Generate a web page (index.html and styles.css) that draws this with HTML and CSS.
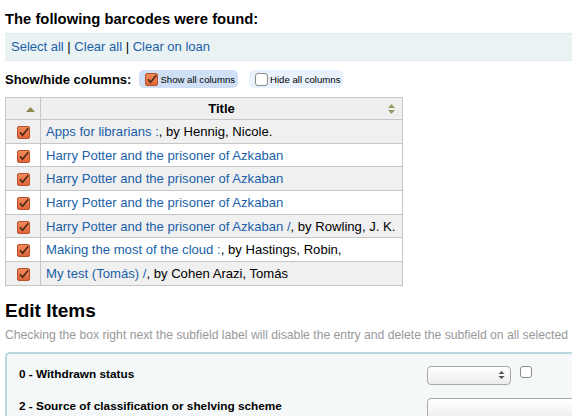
FILE: index.html
```html
<!DOCTYPE html>
<html>
<head>
<meta charset="utf-8">
<link rel="stylesheet" href="styles.css">
</head>
<body>
<div class="page">
  <h1 class="title">The following barcodes were found:</h1>
  <div class="toolbar">
    <a href="#">Select all</a> | <a href="#">Clear all</a> | <a href="#">Clear on loan</a>
  </div>
  <div class="colvis">
    <span class="colvis-label">Show/hide columns:</span>
    <span class="pill pill-on"><span class="cb cb-on"><svg viewBox="0 0 13 13" width="13" height="13"><path d="M3 6.2 L5.6 9.3 L11.2 2.2" fill="none" stroke="#4a2a1a" stroke-width="1.6"/></svg></span>Show all columns</span>
    <span class="pill pill-off"><span class="cb cb-off"></span>Hide all columns</span>
  </div>
  <table class="items">
    <thead>
      <tr>
        <th class="c1"><svg viewBox="0 0 9 5" width="9" height="5"><path d="M0 5 L4.5 0 L9 5Z" fill="#8c8a4e"/></svg></th>
        <th class="c2"><span>Title</span><svg class="sort" viewBox="0 0 7 10" width="7" height="10"><path d="M0 4 L3.5 0 L7 4Z M0 6 L3.5 10 L7 6Z" fill="#9a9a6a"/></svg></th>
      </tr>
    </thead>
    <tbody>
      <tr class="odd"><td class="c1"><span class="cb cb-on"><svg viewBox="0 0 13 13" width="13" height="13"><path d="M3 6.2 L5.6 9.3 L11.2 2.2" fill="none" stroke="#4a2a1a" stroke-width="1.6"/></svg></span></td><td><a href="#">Apps for librarians :</a>, by Hennig, Nicole.</td></tr>
      <tr><td class="c1"><span class="cb cb-on"><svg viewBox="0 0 13 13" width="13" height="13"><path d="M3 6.2 L5.6 9.3 L11.2 2.2" fill="none" stroke="#4a2a1a" stroke-width="1.6"/></svg></span></td><td><a href="#">Harry Potter and the prisoner of Azkaban</a></td></tr>
      <tr class="odd"><td class="c1"><span class="cb cb-on"><svg viewBox="0 0 13 13" width="13" height="13"><path d="M3 6.2 L5.6 9.3 L11.2 2.2" fill="none" stroke="#4a2a1a" stroke-width="1.6"/></svg></span></td><td><a href="#">Harry Potter and the prisoner of Azkaban</a></td></tr>
      <tr><td class="c1"><span class="cb cb-on"><svg viewBox="0 0 13 13" width="13" height="13"><path d="M3 6.2 L5.6 9.3 L11.2 2.2" fill="none" stroke="#4a2a1a" stroke-width="1.6"/></svg></span></td><td><a href="#">Harry Potter and the prisoner of Azkaban</a></td></tr>
      <tr class="odd"><td class="c1"><span class="cb cb-on"><svg viewBox="0 0 13 13" width="13" height="13"><path d="M3 6.2 L5.6 9.3 L11.2 2.2" fill="none" stroke="#4a2a1a" stroke-width="1.6"/></svg></span></td><td><a href="#">Harry Potter and the prisoner of Azkaban /</a>, by Rowling, J. K.</td></tr>
      <tr><td class="c1"><span class="cb cb-on"><svg viewBox="0 0 13 13" width="13" height="13"><path d="M3 6.2 L5.6 9.3 L11.2 2.2" fill="none" stroke="#4a2a1a" stroke-width="1.6"/></svg></span></td><td><a href="#">Making the most of the cloud :</a>, by Hastings, Robin,</td></tr>
      <tr class="odd"><td class="c1"><span class="cb cb-on"><svg viewBox="0 0 13 13" width="13" height="13"><path d="M3 6.2 L5.6 9.3 L11.2 2.2" fill="none" stroke="#4a2a1a" stroke-width="1.6"/></svg></span></td><td><a href="#">My test (Tomás) /</a>, by Cohen Arazi, Tomás</td></tr>
    </tbody>
  </table>
  <h2 class="edit-title">Edit Items</h2>
  <p class="hint">Checking the box right next the subfield label will disable the entry and delete the subfield on all selected items.</p>
  <div class="fieldset">
    <div class="frow">
      <span class="flabel">0 - Withdrawn status</span>
      <span class="select"><svg viewBox="0 0 7 10" width="7" height="10"><path d="M0.5 4 L3.5 1 L6.5 4Z M0.5 6 L3.5 9 L6.5 6Z" fill="#555"/></svg></span>
      <span class="cb cb-plain"></span>
    </div>
    <div class="frow">
      <span class="flabel">2 - Source of classification or shelving scheme</span>
      <span class="select wide"></span>
    </div>
  </div>
</div>
</body>
</html>
```

FILE: styles.css
```css
html, body {
  margin: 0;
  padding: 0;
  background: #fff;
  overflow: hidden;
}
body {
  font-family: "Liberation Sans", Arial, sans-serif;
  color: #000;
  width: 572px;
  height: 416px;
}
.page {
  padding: 0 0 0 5px;
}
a {
  color: #1a5fa8;
  text-decoration: none;
}
.title {
  font-size: 14.8px;
  font-weight: bold;
  margin: 0;
  padding-top: 11px;
  line-height: 17px;
  height: 22px;
}
.toolbar {
  background: #eaf2f4;
  border-top: 1px solid #e0eaed;
  border-bottom: 1px solid #e0eaed;
  height: 26px;
  line-height: 26px;
  padding-left: 6px;
  font-size: 13px;
  width: 600px;
  color: #000;
}
.colvis {
  display: flex;
  align-items: center;
  height: 20px;
  margin-top: 8px;
  white-space: nowrap;
}
.colvis-label {
  font-size: 13px;
  font-weight: bold;
  margin-right: 8px;
}
.pill {
  display: inline-flex;
  align-items: center;
  height: 18px;
  border-radius: 5px;
  font-size: 9.6px;
  padding: 0 3px 0 6px;
  margin-right: 11px;
  white-space: nowrap;
}
.pill-on {
  background: #cfe0f6;
}
.pill-off {
  background: #e9f2fc;
}
.pill .cb {
  margin-right: 2px;
}
.cb {
  display: inline-block;
  width: 13px;
  height: 13px;
  box-sizing: border-box;
  border-radius: 2px;
  vertical-align: middle;
  flex-shrink: 0;
}
.cb svg {
  display: block;
  margin: -1px;
}
.cb-on {
  background: linear-gradient(#f28a5a, #e0663a);
  border: 1px solid #b8502c;
}
.cb-off {
  background: #fff;
  border: 1px solid #8a8a8a;
  border-radius: 3px;
}
.cb-plain {
  background: #fff;
  border: 1px solid #8a8a8a;
  border-radius: 3px;
  width: 12px;
  height: 12px;
}
.items {
  border-collapse: collapse;
  margin-top: 8px;
  width: 398px;
  font-size: 13.1px;
}
.items th, .items td {
  border: 1px solid #c6c6c6;
  padding: 0;
}
.items th {
  background: #efefef;
  height: 21px;
  font-weight: bold;
}
.items th.c1 {
  width: 35px;
  text-align: right;
  padding-right: 5px;
  box-sizing: border-box;
  vertical-align: middle;
}
.items th.c1 svg {
  display: inline-block;
  vertical-align: middle;
}
.items th.c2 {
  position: relative;
  text-align: center;
}
.items th .sort {
  position: absolute;
  right: 7px;
  top: 6px;
}
.items td {
  height: 22.7px;
  padding-left: 5px;
  white-space: nowrap;
}
.items td.c1 {
  text-align: center;
  padding-left: 0;
}
.items tr.odd td {
  background: #f0f0f0;
}
.edit-title {
  font-size: 19px;
  font-weight: bold;
  margin: 14px 0 0 0;
  line-height: 22px;
}
.hint {
  font-size: 12.2px;
  color: #999;
  white-space: nowrap;
  margin: 6px 0 0 0;
  line-height: 14px;
}
.fieldset {
  margin-top: 10px;
  background: #f4f8f9;
  border-top: 2px solid #b9d8dd;
  border-left: 2px solid #b9d8dd;
  border-top-left-radius: 5px;
  width: 600px;
  height: 80px;
  padding-top: 12px;
}
.frow {
  display: flex;
  align-items: flex-start;
  height: 32px;
  padding-left: 12px;
}
.flabel {
  font-size: 11.8px;
  font-weight: bold;
  width: 408px;
  flex-shrink: 0;
  padding-top: 1px;
}
.select {
  display: inline-flex;
  align-items: center;
  justify-content: flex-end;
  width: 84px;
  height: 19px;
  box-sizing: border-box;
  border: 1px solid #a8a8a8;
  border-radius: 4px;
  background: linear-gradient(#ffffff, #ececec);
  padding-right: 5px;
  margin-right: 9px;
  flex-shrink: 0;
}
.select.wide {
  width: 200px;
  height: 24px;
}
```
